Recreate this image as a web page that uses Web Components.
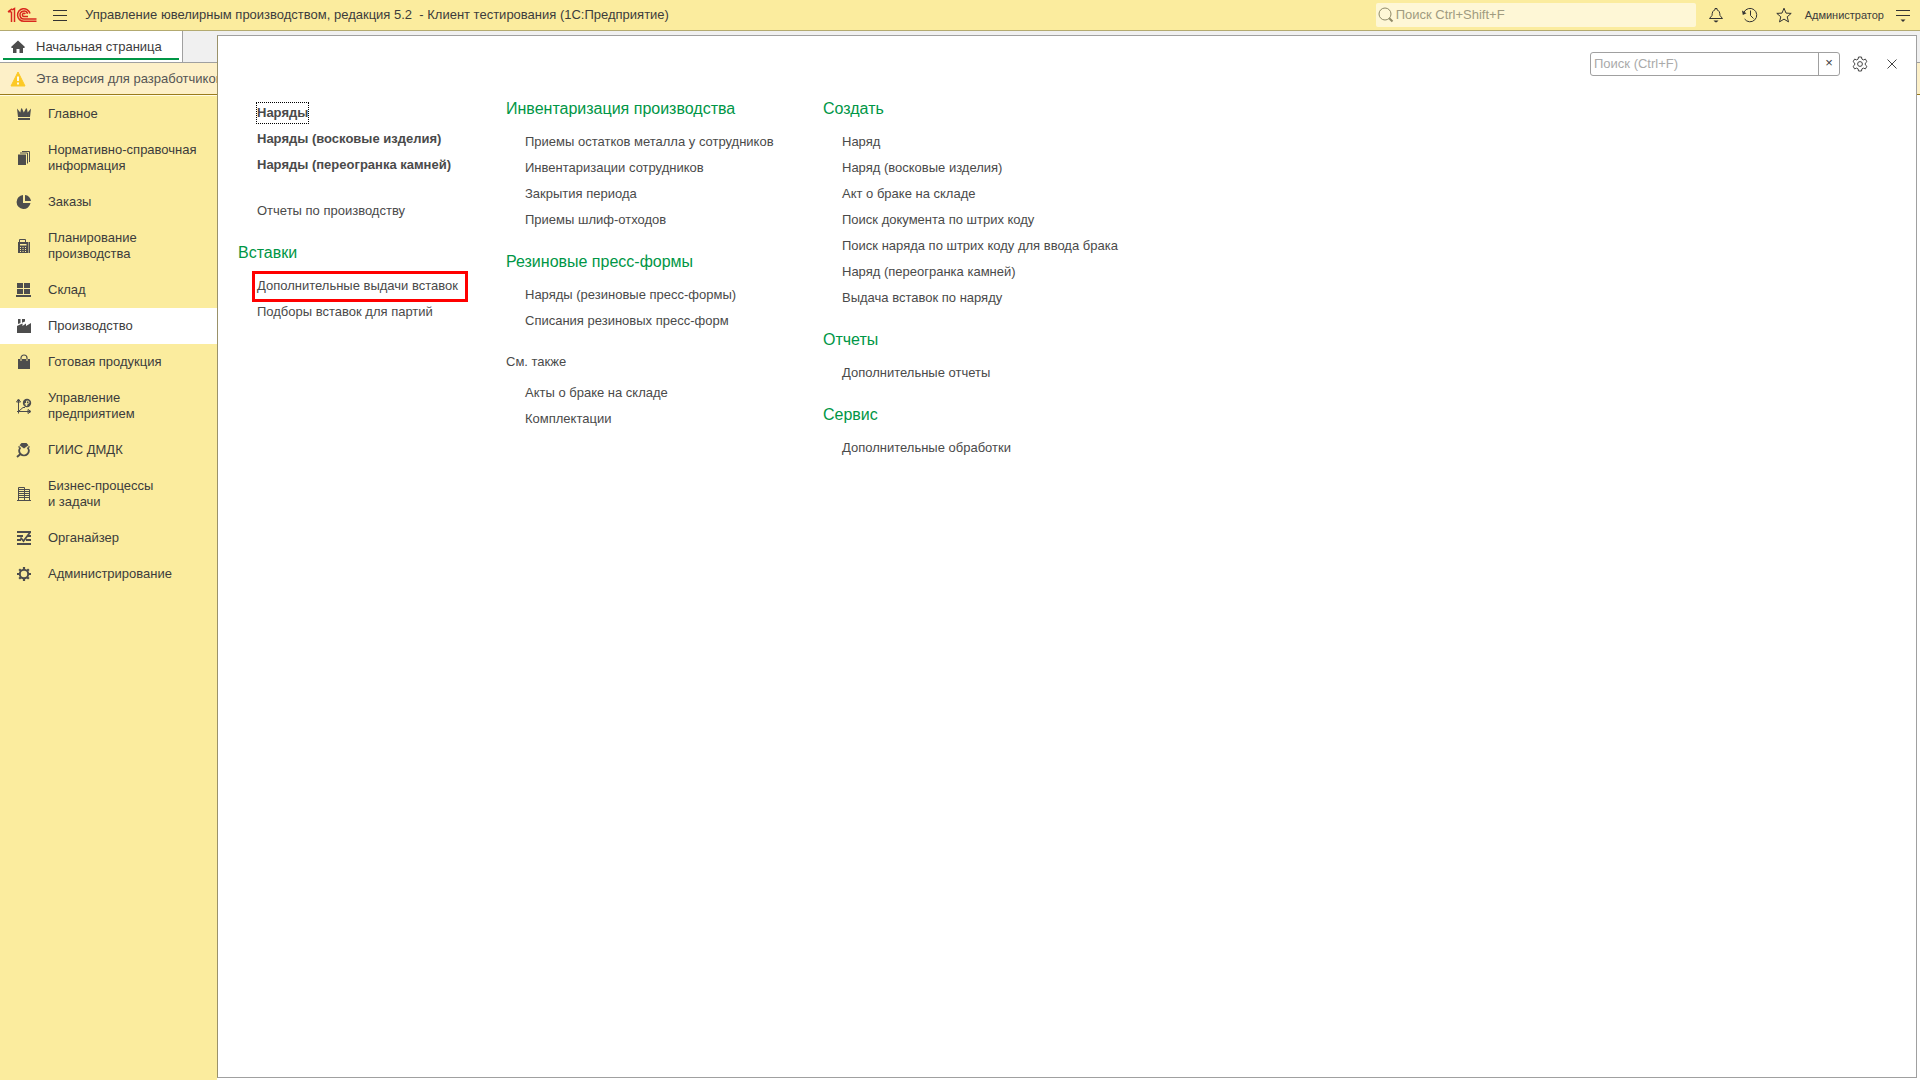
<!DOCTYPE html>
<html lang="ru">
<head>
<meta charset="utf-8">
<title>Управление ювелирным производством, редакция 5.2</title>
<style>
  html, body { height: 100%; margin: 0; }
  body {
    font: 13px/16px "Liberation Sans", Arial, sans-serif;
    color: #3c3c3c;
    background: #fff;
    --yellow: #fbec9e;
    --line: #a0a0a0;
    --green: #009646;
    --link: #4a4a4a;
    --rail: 217px;
  }
</style>
</head>
<body>
<app-shell>
  <title-bar slot="header">Управление ювелирным производством, редакция 5.2&nbsp; - Клиент тестирования (1С:Предприятие)</title-bar>
  <page-tabs slot="tabs">Начальная страница</page-tabs>
  <notice-bar slot="notice">Эта версия для разработчиков</notice-bar>
  <section-nav slot="nav">
    <nav-item icon="crown">Главное</nav-item>
    <nav-item icon="docs">Нормативно-справочная<br>информация</nav-item>
    <nav-item icon="pie">Заказы</nav-item>
    <nav-item icon="calc">Планирование<br>производства</nav-item>
    <nav-item icon="store">Склад</nav-item>
    <nav-item icon="factory" active>Производство</nav-item>
    <nav-item icon="bag">Готовая продукция</nav-item>
    <nav-item icon="chart">Управление<br>предприятием</nav-item>
    <nav-item icon="ring">ГИИС ДМДК</nav-item>
    <nav-item icon="building">Бизнес-процессы<br>и задачи</nav-item>
    <nav-item icon="tasks">Органайзер</nav-item>
    <nav-item icon="cog">Администрирование</nav-item>
  </section-nav>
  <function-panel slot="panel">
    <function-column>
      <function-group>
        <function-link strong focused>Наряды</function-link>
        <function-link strong>Наряды (восковые изделия)</function-link>
        <function-link strong>Наряды (переогранка камней)</function-link>
      </function-group>
      <function-group>
        <function-link>Отчеты по производству</function-link>
      </function-group>
      <function-group heading="Вставки">
        <function-link marked>Дополнительные выдачи вставок</function-link>
        <function-link>Подборы вставок для партий</function-link>
      </function-group>
    </function-column>
    <function-column>
      <function-group heading="Инвентаризация производства">
        <function-link>Приемы остатков металла у сотрудников</function-link>
        <function-link>Инвентаризации сотрудников</function-link>
        <function-link>Закрытия периода</function-link>
        <function-link>Приемы шлиф-отходов</function-link>
      </function-group>
      <function-group heading="Резиновые пресс-формы">
        <function-link>Наряды (резиновые пресс-формы)</function-link>
        <function-link>Списания резиновых пресс-форм</function-link>
      </function-group>
      <function-group heading="См. также" minor>
        <function-link>Акты о браке на складе</function-link>
        <function-link>Комплектации</function-link>
      </function-group>
    </function-column>
    <function-column>
      <function-group heading="Создать">
        <function-link>Наряд</function-link>
        <function-link>Наряд (восковые изделия)</function-link>
        <function-link>Акт о браке на складе</function-link>
        <function-link>Поиск документа по штрих коду</function-link>
        <function-link>Поиск наряда по штрих коду для ввода брака</function-link>
        <function-link>Наряд (переогранка камней)</function-link>
        <function-link>Выдача вставок по наряду</function-link>
      </function-group>
      <function-group heading="Отчеты">
        <function-link>Дополнительные отчеты</function-link>
      </function-group>
      <function-group heading="Сервис">
        <function-link>Дополнительные обработки</function-link>
      </function-group>
    </function-column>
  </function-panel>
</app-shell>

<script>
const ICONS = {
  logo: [30, 16, `<g fill="none" stroke="#d9281e" stroke-width="1.500"><path d="M1 4.800L5 1.800M1 4.800h3M4.500 4.500V15M7.500 15V1.500L5 2.800"/><path d="M23 6.500A6.300 6.300 0 1 0 16.800 14.300H29.500"/><path d="M20.600 6.800A3.900 3.900 0 1 0 16.800 11.900H29.500"/><path d="M18.300 7a1.600 1.600 0 1 0-1.500 2.500H21"/></g>`],
  menu: [16, 16, `<path d="M1 3.500h14M1 8.500h14M1 13.500h14" stroke="#333" fill="none"/>`],
  bell: [16, 16, `<path d="M1.500 11.500h13L12 8.500C11.800 5 11 3.500 9 2.800V1.500H7v1.300C5 3.500 4.200 5 4 8.500z" fill="none" stroke="#333"/><path d="M5.500 13.500h5L8.800 15.200H7.200z" fill="#333"/>`],
  history: [16, 16, `<path d="M2 5.200A6.700 6.700 0 1 1 2.600 12M8.500 3.500v5l3 3" fill="none" stroke="#333"/><path d="M0 3.500l4.500 2.700L.8 8z" fill="#333"/>`],
  star: [16, 16, `<path d="M8 1.200l2 4.900 5.200.3-4 3.400 1.300 5.100L8 12.100l-4.500 2.800 1.300-5.100-4-3.400 5.200-.3z" fill="none" stroke="#333"/>`],
  service: [16, 16, `<path d="M1 3.500h14M1 8.500h14" stroke="#333"/><path d="M5.500 12.500h5L8 15z" fill="#333"/>`],
  search: [16, 16, `<circle cx="7" cy="7" r="6" fill="none" stroke="#8f8a68"/><path d="M11.200 11.200l3.300 3.300" stroke="#8f8a68" stroke-width="2"/>`],
  home: [16, 16, `<path d="M8 1.500l7 6.500-.8 1H13v5H9.500v-4h-3v4H3V9H1.800L1 8z" fill="#4d4d4d"/>`],
  warn: [16, 16, `<path d="M8 1l7 14H1z" fill="#fcc926" stroke="#fcc926" stroke-linejoin="round"/><path d="M8 5.500v4.500M8 11.500v2" stroke="#fff" stroke-width="1.800"/>`],
  gear: [16, 16, `<path d="M6.500 1h3l.4 2.100 1.500.8 2-.8 1.500 2.600-1.600 1.400v1.800l1.600 1.400-1.500 2.600-2-.8-1.500.8-.4 2.100h-3l-.4-2.100-1.500-.8-2 .8-1.500-2.600 1.600-1.400V7.100L1.100 5.700l1.500-2.600 2 .8 1.500-.8z" fill="none" stroke="#444"/><circle cx="8" cy="8" r="2.400" fill="none" stroke="#444"/>`],
  close: [16, 16, `<path d="M3.500 3.500l9 9M12.500 3.500l-9 9" stroke="#444" fill="none"/>`],
  crown: [16, 16, `<path d="M1 2.500l3.300 4L5 3l.8-1 2 4.500L10.200 2l.8 1 .7 3.500 3.300-4L14 11H2z" fill="#4d4d4d"/><path d="M2 12h12v2H2z" fill="#4d4d4d"/>`],
  docs: [16, 16, `<path d="M2 4.500h8V15H2z" fill="#4d4d4d"/><path d="M4 3h7.500v10.500M6 1.500h7.500V12" fill="none" stroke="#4d4d4d"/>`],
  pie: [16, 16, `<path d="M7 1v8h7.500A7 7 0 1 1 7 1z" fill="#4d4d4d"/><path d="M9 1a6.500 6.500 0 0 1 6 6H9z" fill="#4d4d4d"/>`],
  calc: [16, 16, `<path d="M3.500 5V1.500h6V5M13.500 4v11" fill="none" stroke="#4d4d4d"/><path fill-rule="evenodd" d="M2 4h10.500v11H2zM4 6v1.500h6.500V6zM4 9v1h1V9zm2.500 0v1h1V9zM9 9v1h1V9zM4 11v1h1v-1zm2.500 0v1h1v-1zM9 11v1h1v-1zM4 13v1h1v-1zm2.500 0v1h1v-1zM9 13v1h1v-1z" fill="#4d4d4d"/>`],
  store: [16, 16, `<path d="M1 1h6v5H1zM8 1h6v5H8zM1 7h6v5H1zM8 7h6v5H8zM0 13h15v2H0z" fill="#4d4d4d"/>`],
  factory: [16, 16, `<path d="M1 15V8l2-1 3.500-1.500V8L10 5.500V8l5-3v10zM2 1h2.500v4L2 6zM6 1h3v2.500L6 4.700z" fill="#4d4d4d"/>`],
  bag: [16, 16, `<path d="M2 5h12v10H2z" fill="#4d4d4d"/><path d="M5 6V4a3 3 0 0 1 6 0v2" fill="none" stroke="#4d4d4d" stroke-width="1.200"/><path d="M5 5v2M11 5v2" stroke="#fbec9e"/>`],
  chart: [16, 16, `<path d="M2.500 15.500V2M1 13.500h13M.5 4l2-3 2 3zM12 11.500l3 2-3 2zM3 13l4-3.500h2" fill="none" stroke="#4d4d4d"/><circle cx="11" cy="5" r="4.200" fill="#4d4d4d"/><path d="M10.500 8V3h1.300a1.200 1.200 0 0 1 0 2.500H8.800M8.800 6.800h3" fill="none" stroke="#fbec9e" stroke-width=".9"/>`],
  ring: [16, 16, `<path d="M5.500 1h5l2 2.200L8 6.500 3.500 3.200z" fill="#4d4d4d"/><path d="M4.500 5.500a5 5 0 0 0 0 6.500 5 5 0 0 0 7 0 5 5 0 0 0 0-6.500" fill="none" stroke="#4d4d4d" stroke-width="1.800"/><path d="M4.500 12L1 15" stroke="#4d4d4d" stroke-width="2"/><path d="M2.500 4.500l1.200 1M13.500 4.500l-1.200 1" stroke="#4d4d4d" stroke-width="1.500"/>`],
  building: [16, 16, `<path d="M2.500 15V1.500h6V15M13.500 3.500V15M8.500 3.500h5M1 14.500h14M2.500 3.500h6M2.500 5.500h6M2.500 7.500h6M2.500 9.500h6M2.500 11.500h6M9 5.500h4M9 7.500h4M9 9.500h4M9 11.500h4" fill="none" stroke="#4d4d4d"/>`],
  tasks: [16, 16, `<path d="M1 2h14M1 6h6M11 6h4M1 10h4M10 10h5M1 14h14" stroke="#4d4d4d" stroke-width="1.800"/><path d="M4.500 7.500L7.500 11 14 2.500" fill="none" stroke="#4d4d4d" stroke-width="1.800"/>`],
  cog: [16, 16, `<circle cx="8" cy="8" r="4.200" fill="none" stroke="#4d4d4d" stroke-width="2"/><path d="M8 1v2.500M8 12.500V15M1 8h2.500M12.500 8H15M3.200 3.200l1.600 1.600M11.200 11.200l1.600 1.600M12.800 3.200l-1.600 1.600M4.800 11.200l-1.600 1.600" stroke="#4d4d4d" stroke-width="2.200"/>`]
};

class Base extends HTMLElement {
  connectedCallback() {
    if (this.shadowRoot) return;
    this.attachShadow({ mode: 'open' }).innerHTML =
      `<style>*{box-sizing:border-box}button{border:0;padding:0;background:none;font:inherit;color:inherit;display:flex;align-items:center;justify-content:center}a{color:inherit;text-decoration:none}input{font:inherit;min-width:0;border:0;outline:0;padding:0;background:none}${this.css()}</style>${this.html()}`;
  }
  css() { return ''; }
  html() { return '<slot></slot>'; }
}

customElements.define('ui-icon', class extends Base {
  css() { return ':host{display:block;flex:none}svg{display:block}'; }
  html() {
    const [w, h, body] = ICONS[this.getAttribute('name')];
    return `<svg width="${w}" height="${h}" viewBox="0 0 ${w} ${h}" aria-hidden="true">${body}</svg>`;
  }
});

customElements.define('app-shell', class extends Base {
  css() { return `
    :host{display:flex;flex-direction:column;min-height:100vh}
    .work{position:relative;flex:1;display:flex;flex-direction:column}
    .nav{flex:1;display:flex}
    .panel{position:absolute;inset:4px 3px 2px var(--rail);display:flex}`; }
  html() { return `<slot name="header"></slot>
    <div class="work">
      <slot name="tabs"></slot><slot name="notice"></slot>
      <div class="nav"><slot name="nav"></slot></div>
      <div class="panel"><slot name="panel"></slot></div>
    </div>`; }
});

customElements.define('title-bar', class extends Base {
  css() { return `
    :host{display:flex;align-items:center;height:31px;background:var(--yellow);border-bottom:1px solid #b3aa70;padding:0 9px 0 7px;box-sizing:border-box}
    .menu{margin:0 17px 0 15px}
    .title{flex:1;white-space:nowrap}
    .search{display:flex;align-items:center;gap:2px;width:320px;height:24px;padding:0 2px;border-radius:2px;background:#fef7d6;margin-right:12px}
    .search input{flex:1}
    .search input::placeholder{color:#a09b80;opacity:1}
    .tools{display:flex;align-items:center;gap:18px}
    .user{font-size:11px;margin:0 11px 0 13px}`; }
  html() { return `<ui-icon name="logo"></ui-icon>
    <button class="menu" aria-label="Меню"><ui-icon name="menu"></ui-icon></button>
    <div class="title"><slot></slot></div>
    <label class="search"><ui-icon name="search"></ui-icon><input type="text" placeholder="Поиск Ctrl+Shift+F" aria-label="Поиск"></label>
    <div class="tools">
      <button aria-label="Оповещения"><ui-icon name="bell"></ui-icon></button>
      <button aria-label="История"><ui-icon name="history"></ui-icon></button>
      <button aria-label="Избранное"><ui-icon name="star"></ui-icon></button>
    </div>
    <button class="user">Администратор</button>
    <button aria-label="Сервис"><ui-icon name="service"></ui-icon></button>`; }
});

customElements.define('page-tabs', class extends Base {
  css() { return `
    :host{display:flex;height:32px;box-sizing:border-box;background:#f0f0f0;border-bottom:1px solid var(--line)}
    a{display:flex;align-items:center;gap:10px;padding:0 20px 0 10px;background:#fff;border-right:1px solid var(--line);position:relative}
    a::after{content:"";position:absolute;left:3px;right:3px;bottom:2px;height:2px;background:var(--green)}`; }
  html() { return `<a href="#"><ui-icon name="home"></ui-icon><slot></slot></a>`; }
});

customElements.define('notice-bar', class extends Base {
  css() { return `
    :host{display:flex;height:32px;box-sizing:border-box;background:#fdf0c8;border-bottom:1px solid #9a7b1c}
    div{display:flex;align-items:center;gap:10px;width:var(--rail);padding-left:10px;overflow:hidden;white-space:nowrap;color:#555}`; }
  html() { return `<div><ui-icon name="warn"></ui-icon><span><slot></slot></span></div>`; }
});

customElements.define('section-nav', class extends Base {
  css() { return ':host{display:block}nav{width:var(--rail);height:100%;background:var(--yellow);border-top:1px solid #fffbe6}'; }
  html() { return '<nav><slot></slot></nav>'; }
});

customElements.define('nav-item', class extends Base {
  css() { return `
    :host{display:block}
    :host([active]){background:#fff}
    a{display:flex;align-items:center;gap:16px;padding:10px 0 10px 16px}`; }
  html() { return `<a href="#"><ui-icon name="${this.getAttribute('icon')}"></ui-icon><span><slot></slot></span></a>`; }
});

customElements.define('function-panel', class extends Base {
  css() { return `
    :host{display:block;flex:1;background:#fff;border:1px solid var(--line);border-left-color:#9a9169}
    .bar{display:flex;justify-content:flex-end;align-items:center;height:24px;margin:16px 16px 0 0}
    .search{display:flex;width:250px;height:24px;border:1px solid var(--line);border-radius:3px;margin-right:12px}
    .search input{flex:1;padding-left:3px}
    .search input::placeholder{color:#aaa;opacity:1}
    .search button{width:21px;border-left:1px solid var(--line);padding-bottom:2px}
    .tool{margin-right:16px}
    .tool:last-child{margin-right:0}
    .columns{display:grid;grid-template-columns:268px 317px auto;align-items:start;padding:23px 20px}`; }
  html() { return `<div class="bar">
      <div class="search"><input type="text" placeholder="Поиск (Ctrl+F)" aria-label="Поиск"><button aria-label="Очистить">×</button></div>
      <button class="tool" aria-label="Настройка"><ui-icon name="gear"></ui-icon></button>
      <button class="tool" aria-label="Закрыть"><ui-icon name="close"></ui-icon></button>
    </div>
    <div class="columns"><slot></slot></div>`; }
});

customElements.define('function-column', class extends Base {
  css() { return ':host{display:flex;flex-direction:column;gap:19px}'; }
});

customElements.define('function-group', class extends Base {
  css() { return `
    :host{display:block}
    :host(:not([heading])){padding-top:1px}
    h2{margin:0 0 10px;font-size:16px;line-height:20px;font-weight:400;color:var(--green);white-space:nowrap}
    :host([minor]) h2{font-size:13px;line-height:18px;margin-bottom:9px;color:var(--link)}
    .items{display:flex;flex-direction:column;align-items:flex-start;padding-left:19px}`; }
  html() {
    const h = this.getAttribute('heading');
    return `${h ? `<h2>${h}</h2>` : ''}<div class="items"><slot></slot></div>`;
  }
});

customElements.define('function-link', class extends Base {
  css() { return `
    :host{display:block;color:var(--link);white-space:nowrap}
    :host([strong]){font-weight:700}
    a{display:block;position:relative;line-height:20px;margin:3px 0}
    :host([focused]) a{outline:1px dotted #000}
    :host([marked]) a::after{content:"";position:absolute;inset:-5px -10px -6px -5px;border:3px solid #f00}`; }
  html() { return '<a href="#"><slot></slot></a>'; }
});
</script>
</body>
</html>
